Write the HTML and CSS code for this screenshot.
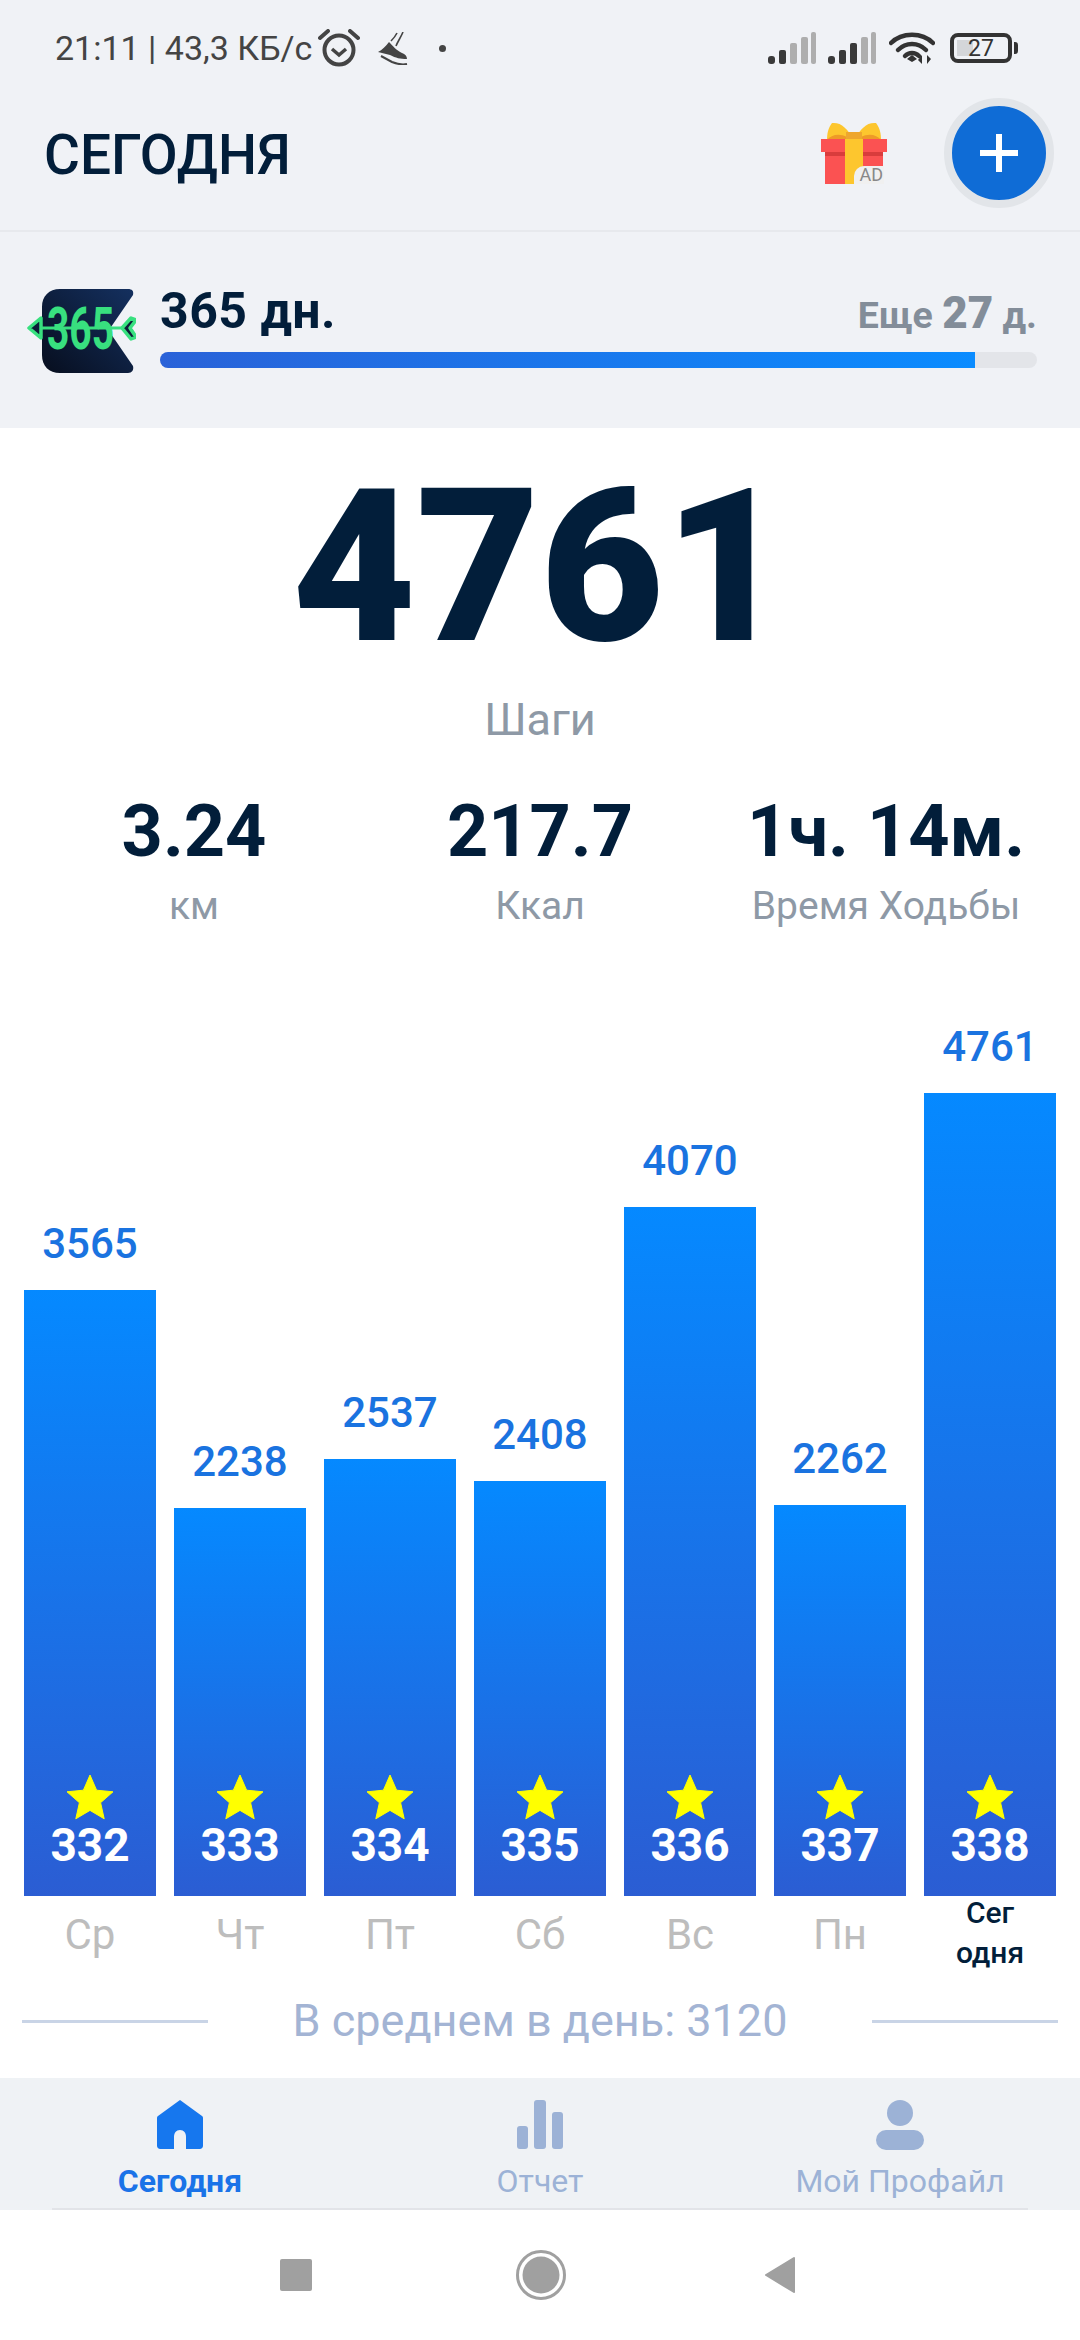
FILE: index.html
```html
<!DOCTYPE html>
<html lang="ru">
<head>
    <meta charset="UTF-8">
    <meta name="viewport" content="width=device-width, initial-scale=1.0">
    <title>Сегодня</title>
    <link rel="stylesheet" href="styles.css">
</head>
<body>
    <div class="status-bar">
        <div class="status-left">
            <span class="status-text">21:11 | 43,3 КБ/с</span>
            <svg class="icon-alarm" viewBox="0 0 42 38" width="42" height="38">
                <circle cx="21" cy="21" r="14.5" fill="none" stroke="#444" stroke-width="4"/>
                <path d="M14 20l7 6 7-6" fill="none" stroke="#444" stroke-width="3.5"/>
                <path d="M2 9L10 2M40 9L32 2" fill="none" stroke="#444" stroke-width="4" stroke-linecap="round"/>
            </svg>
            <svg class="icon-shoe" viewBox="0 0 30 33" width="30" height="33">
                <path d="M0 20c4-2 8-6 11-10 3 3 8 9 13 11 3 1 5 3 5 6-7 0-11-1-17-4-4-1-8-2-12-3z" fill="#444"/>
                <path d="M3 24l11 6c5 2 10 3 15 2" fill="none" stroke="#444" stroke-width="2"/>
                <path d="M13 9C16 6 18 3 19 1M18 14C20 9 23 5 25 0" fill="none" stroke="#444" stroke-width="1.6"/>
            </svg>
            <span class="status-dot"></span>
        </div>
        <div class="status-right">
            <svg viewBox="0 0 48 32" width="48" height="32">
                <rect x="0" y="24" width="7" height="8" rx="3" fill="#3a3a3a"/>
                <rect x="11" y="18" width="7" height="14" rx="2" fill="#3a3a3a"/>
                <rect x="22" y="11" width="7" height="21" rx="2" fill="#aeaeae"/>
                <rect x="33" y="5" width="7" height="27" rx="2" fill="#aeaeae"/>
                <rect x="43" y="0" width="5" height="32" rx="2" fill="#aeaeae"/>
            </svg>
            <svg class="signal-two" viewBox="0 0 48 32" width="48" height="32">
                <rect x="0" y="24" width="7" height="8" rx="3" fill="#3a3a3a"/>
                <rect x="11" y="18" width="7" height="14" rx="2" fill="#3a3a3a"/>
                <rect x="22" y="11" width="7" height="21" rx="2" fill="#3a3a3a"/>
                <rect x="33" y="5" width="7" height="27" rx="2" fill="#aeaeae"/>
                <rect x="43" y="0" width="5" height="32" rx="2" fill="#aeaeae"/>
            </svg>
            <svg class="icon-wifi" viewBox="0 0 46 34" width="46" height="34">
                <path d="M2 12C13 1 33 1 44 12" fill="none" stroke="#333" stroke-width="4.5" stroke-linecap="round"/>
                <path d="M9 19C17 11 29 11 37 19" fill="none" stroke="#333" stroke-width="4.5" stroke-linecap="round"/>
                <path d="M16 25C20 21 26 21 30 25" fill="none" stroke="#333" stroke-width="4.5" stroke-linecap="round"/>
                <path d="M18 28l5-4 5 4-5 3z" fill="#333"/>
                <path d="M33 33V24l-4 5zM38 24v9l4-5z" fill="#333"/>
            </svg>
            <div class="battery">
                <div class="battery-body">
                    <div class="battery-level"></div>
                    <span class="battery-text">27</span>
                </div>
                <div class="battery-tip"></div>
            </div>
        </div>
    </div>

    <header class="top-header">
        <h1 class="page-title">СЕГОДНЯ</h1>
        <div class="header-actions">
            <div class="gift">
                <svg viewBox="0 0 66 62" width="66" height="62">
                    <path d="M33 18C26 6 20 0 11 1 7 6 6 12 6 18z" fill="#fdc62e"/>
                    <path d="M33 18C40 6 46 0 55 1 59 6 60 12 60 18z" fill="#fdc62e"/>
                    <path d="M6 18c4-5 12-7 20-3l2 3zM60 18c-4-5-12-7-20-3l-2 3z" fill="#ee9a27"/>
                    <rect x="25" y="10" width="16" height="8" fill="#eea62e"/>
                    <rect x="0" y="17" width="66" height="13" fill="#fb5252"/>
                    <rect x="4" y="30" width="58" height="32" fill="#fb5252"/>
                    <rect x="4" y="30" width="58" height="4" fill="#d93c3c"/>
                    <rect x="24" y="17" width="18" height="45" fill="#fdc62e"/>
                </svg>
                <span class="gift-ad">AD</span>
            </div>
            <div class="add-button">
                <div class="add-plus"></div>
            </div>
        </div>
    </header>

    <section class="streak">
        <svg class="streak-logo" viewBox="0 0 110 84" width="110" height="84">
            <defs>
                <linearGradient id="logoBg" x1="0" y1="1" x2="1" y2="0">
                    <stop offset="0" stop-color="#070e1e"/>
                    <stop offset="1" stop-color="#14305f"/>
                </linearGradient>
            </defs>
            <path d="M16 18C16 7 23 0 34 0H102c4 0 6 2 5 6L85 38c-1 2-1 5 0 7l22 32c1 4-1 7-5 7H34C23 84 16 77 16 66z" fill="url(#logoBg)"/>
            <path d="M3 39L15 29V49zM96 39l9-10 5 2-6 8 6 9-5 2z" fill="#0d1c38" stroke="#38e07f" stroke-width="3.500" stroke-linejoin="round"/>
            <text class="logo-text" transform="translate(21 60) scale(0.66 1)">365</text>
            <path d="M15 39H97" stroke="#38e07f" stroke-width="3"/>
        </svg>
        <div class="streak-body">
            <div class="streak-row">
                <span class="streak-days">365 дн.</span>
                <span class="streak-left">Еще <b>27</b> д.</span>
            </div>
            <div class="progress">
                <div class="progress-fill" style="width: 92.9%"></div>
            </div>
        </div>
    </section>

    <main class="content">
        <div class="steps">4761</div>
        <div class="steps-label">Шаги</div>

        <div class="stats">
            <div class="stat">
                <div class="stat-value">3.24</div>
                <div class="stat-label">км</div>
            </div>
            <div class="stat">
                <div class="stat-value">217.7</div>
                <div class="stat-label">Ккал</div>
            </div>
            <div class="stat">
                <div class="stat-value">1ч. 14м.</div>
                <div class="stat-label">Время Ходьбы</div>
            </div>
        </div>

        <div class="chart" id="chart"></div>

        <div class="average">
            <span class="average-line"></span>
            <span class="average-text">В среднем в день: 3120</span>
            <span class="average-line"></span>
        </div>
    </main>

    <nav class="tabs">
        <div class="tab active">
            <svg viewBox="0 0 46 50" width="46" height="50">
                <path d="M23 0L45 16c1 1 1 1 1 3V46c0 2-2 3-3 3H29V37c0-4-2-7-6-7s-6 3-6 7V49H3c-1 0-3-1-3-3V19c0-2 0-2 1-3z" fill="#1677ee"/>
            </svg>
            <span class="tab-label">Сегодня</span>
        </div>
        <div class="tab">
            <svg viewBox="0 0 46 50" width="46" height="50">
                <rect x="0" y="26" width="11" height="23" rx="3" fill="#9cb2d6"/>
                <rect x="17" y="0" width="12" height="49" rx="3" fill="#9cb2d6"/>
                <rect x="35" y="12" width="11" height="37" rx="3" fill="#9cb2d6"/>
            </svg>
            <span class="tab-label">Отчет</span>
        </div>
        <div class="tab">
            <svg viewBox="0 0 48 50" width="48" height="50">
                <circle cx="24" cy="13" r="13" fill="#9cb2d6"/>
                <rect x="0" y="30" width="48" height="20" rx="10" fill="#9cb2d6"/>
            </svg>
            <span class="tab-label">Мой Профайл</span>
        </div>
    </nav>

    <div class="system-nav">
        <div class="nav-square"></div>
        <svg class="nav-circle" viewBox="0 0 50 50" width="50" height="50">
            <circle cx="25" cy="25" r="23.500" fill="none" stroke="#a0a0a0" stroke-width="3"/>
            <circle cx="25" cy="25" r="18.500" fill="#a0a0a0"/>
        </svg>
        <svg viewBox="0 0 32 38" width="32" height="38">
            <path d="M30 2L2 19L30 36z" fill="#a0a0a0" stroke="#a0a0a0" stroke-width="2" stroke-linejoin="round"/>
        </svg>
    </div>

    <script>
        const days = [
            { steps: 3565, height: 606, num: 332, name: "Ср" },
            { steps: 2238, height: 388, num: 333, name: "Чт" },
            { steps: 2537, height: 437, num: 334, name: "Пт" },
            { steps: 2408, height: 415, num: 335, name: "Сб" },
            { steps: 4070, height: 689, num: 336, name: "Вс" },
            { steps: 2262, height: 391, num: 337, name: "Пн" },
            { steps: 4761, height: 803, num: 338, name: "Сег<br>одня", today: true },
        ];
        const star = '<svg viewBox="0 0 48 46" width="48" height="46"><path d="M24 1l6.6 15.2 16.4 1.6-12.4 10.9 3.6 16.1L24 36.400 9.800 44.800l3.600-16.100L1 17.800l16.400-1.600z" fill="#ffff00" stroke="#ffff00" stroke-linejoin="round"/></svg>';
        const chart = document.getElementById("chart");

        days.forEach(day => {
            const col = document.createElement("div");
            col.className = "chart-col";
            col.innerHTML = `
                <div class="bar-value">${day.steps}</div>
                <div class="bar" style="height: ${day.height}px">${star}<span class="bar-num">${day.num}</span></div>
                <div class="bar-day${day.today ? " today" : ""}">${day.name}</div>`;
            chart.appendChild(col);
        });
    </script>
</body>
</html>
```

FILE: styles.css
```css
* {
    box-sizing: border-box;
}
body {
    margin: 0;
    width: 1080px;
    height: 2340px;
    overflow: hidden;
    font-family: Roboto, "Noto Sans", sans-serif;
    background-color: #fff;
    color: #021e3a;
}

/* status bar */
.status-bar {
    height: 90px;
    padding: 6px 62px 0 55px;
    display: flex;
    justify-content: space-between;
    align-items: center;
    background-color: #f0f2f6;
}
.status-left, .status-right {
    display: flex;
    align-items: center;
}
.status-text {
    font-size: 34px;
    color: #444;
    white-space: nowrap;
}
.icon-alarm {
    margin-left: 6px;
}
.icon-shoe {
    margin-left: 18px;
}
.status-dot {
    width: 7px;
    height: 7px;
    margin-left: 31px;
    border-radius: 50%;
    background-color: #444;
}
.signal-two {
    margin-left: 12px;
}
.icon-wifi {
    margin-left: 13px;
}
.battery {
    margin-left: 15px;
    display: flex;
    align-items: center;
}
.battery-body {
    position: relative;
    width: 62px;
    height: 30px;
    border: 4px solid #333;
    border-radius: 8px;
    display: flex;
    align-items: center;
    justify-content: center;
}
.battery-level {
    position: absolute;
    left: 3px;
    top: 3px;
    bottom: 3px;
    width: 16px;
    background-color: #d4d6d9;
}
.battery-text {
    position: relative;
    font-size: 23px;
    color: #333;
}
.battery-tip {
    width: 4px;
    height: 12px;
    margin-left: 2px;
    border-radius: 0 3px 3px 0;
    background-color: #333;
}

/* header */
.top-header {
    height: 142px;
    padding: 0 26px 14px 44px;
    display: flex;
    justify-content: space-between;
    align-items: center;
    background-color: #f0f2f6;
    border-bottom: 2px solid #e7e9ed;
}
.page-title {
    margin: 4px 0 0;
    font-size: 55px;
    font-weight: 500;
}
.header-actions {
    display: flex;
    align-items: center;
    gap: 57px;
}
.gift {
    position: relative;
    width: 66px;
    height: 62px;
}
.gift svg {
    display: block;
}
.gift-ad {
    position: absolute;
    right: 3px;
    bottom: 0;
    padding: 0 1px 0 5px;
    border-radius: 10px 0 0 0;
    font-size: 18px;
    line-height: 18px;
    color: #888;
    background-color: #f0f0f0;
}
.add-button {
    width: 110px;
    height: 110px;
    border: 8px solid #e2e5e9;
    border-radius: 50%;
    background-color: #0f6cd6;
    display: flex;
    align-items: center;
    justify-content: center;
}
.add-plus {
    position: relative;
    width: 38px;
    height: 6px;
    background-color: #fff;
}
.add-plus::after {
    content: "";
    position: absolute;
    left: 16px;
    top: -16px;
    width: 6px;
    height: 38px;
    background-color: #fff;
}

/* streak */
.streak {
    height: 196px;
    padding: 0 43px 0 26px;
    display: flex;
    align-items: center;
    gap: 24px;
    background-color: #f0f2f6;
}
.streak-logo {
    flex: none;
    margin-top: 2px;
}
.logo-text {
    font-size: 59px;
    font-weight: 700;
    fill: #38e07f;
}
.streak-body {
    flex: 1;
    margin-bottom: 10px;
}
.streak-row {
    display: flex;
    justify-content: space-between;
    align-items: baseline;
}
.streak-days {
    font-size: 50px;
    font-weight: 700;
    letter-spacing: 0.5px;
}
.streak-left {
    font-size: 37.5px;
    font-weight: 700;
    color: #838d99;
}
.streak-left b {
    font-size: 44px;
}
.progress {
    height: 16px;
    margin-top: 12px;
    border-radius: 8px;
    background-color: #e3e5e9;
    overflow: hidden;
}
.progress-fill {
    height: 100%;
    background: linear-gradient(to right, #2a62d8, #0a8cff);
}

/* steps */
.content {
    height: 1650px;
    padding-top: 44px;
}
.steps {
    font-size: 214px;
    line-height: 190px;
    font-weight: 900;
    text-align: center;
}
.steps-label {
    margin-top: 33px;
    font-size: 45px;
    line-height: 50px;
    text-align: center;
    color: #8e99a6;
}
.stats {
    margin-top: 45px;
    padding: 0 21px;
    display: flex;
}
.stat {
    flex: 1;
    text-align: center;
}
.stat-value {
    font-size: 72px;
    line-height: 84px;
    font-weight: 700;
    white-space: nowrap;
}
.stat-label {
    margin-top: 11px;
    font-size: 39px;
    line-height: 42px;
    color: #8e99a6;
}

/* chart */
.chart {
    height: 1045px;
    margin-top: 4px;
    padding: 0 24px;
    display: flex;
    gap: 18px;
    align-items: flex-end;
}
.chart-col {
    width: 132px;
    display: flex;
    flex-direction: column;
    align-items: center;
}
.bar-value {
    margin-bottom: 22px;
    font-size: 42px;
    line-height: 48px;
    font-weight: 500;
    color: #1a73e0;
}
.bar {
    width: 100%;
    padding-bottom: 29px;
    display: flex;
    flex-direction: column;
    justify-content: flex-end;
    align-items: center;
    background: linear-gradient(to bottom, #0589ff, #2b5dd3);
}
.bar svg {
    display: block;
}
.bar-num {
    margin-top: 3px;
    font-size: 46px;
    line-height: 44px;
    font-weight: 700;
    color: #fff;
}
.bar-day {
    height: 80px;
    padding-top: 15px;
    font-size: 42px;
    line-height: 48px;
    color: #bdbdbd;
    text-align: center;
}
.bar-day.today {
    padding-top: 0;
    margin-top: -3px;
    height: 83px;
    font-size: 30px;
    line-height: 40px;
    font-weight: 500;
    color: #021e3a;
}

/* average */
.average {
    margin-top: 20px;
    padding: 0 22px;
    display: flex;
    justify-content: space-between;
    align-items: center;
}
.average-line {
    width: 186px;
    height: 3px;
    background-color: #c9d4e6;
}
.average-text {
    font-size: 45px;
    line-height: 50px;
    color: #a3b4d4;
}

/* tabs */
.tabs {
    position: relative;
    height: 132px;
    padding-top: 22px;
    display: flex;
    background-color: #eff2f5;
}
.tabs::after {
    content: "";
    position: absolute;
    left: 52px;
    right: 52px;
    bottom: 0;
    height: 2px;
    background-color: #e2e4e8;
}
.tab {
    flex: 1;
    display: flex;
    flex-direction: column;
    align-items: center;
}
.tab-label {
    margin-top: 13px;
    font-size: 32px;
    line-height: 36px;
    color: #9cb2d6;
}
.tab.active .tab-label {
    font-weight: 700;
    color: #1a73e8;
}

/* android nav */
.system-nav {
    height: 130px;
    padding: 0 284px 0 280px;
    display: flex;
    justify-content: space-between;
    align-items: center;
}
.nav-square {
    width: 32px;
    height: 32px;
    border-radius: 2px;
    background-color: #a0a0a0;
}
.nav-circle {
    margin-left: 6px;
}
```
